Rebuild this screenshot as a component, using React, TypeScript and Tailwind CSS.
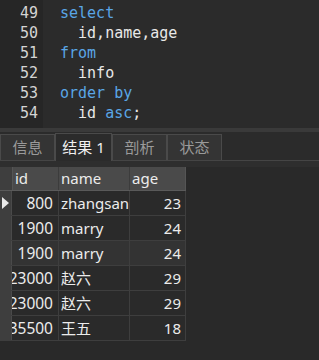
import React from 'react';

const mono = { fontFamily: '"DejaVu Sans Mono", "Liberation Mono", monospace' };
const ui = { fontFamily: '"Noto Sans", "Noto Sans CJK SC", sans-serif' };

type Tok = { t: string; kw?: boolean };
const lines: { n: number; indent: boolean; toks: Tok[] }[] = [
  { n: 49, indent: false, toks: [{ t: 'select', kw: true }] },
  { n: 50, indent: true, toks: [{ t: 'id,name,age' }] },
  { n: 51, indent: false, toks: [{ t: 'from', kw: true }] },
  { n: 52, indent: true, toks: [{ t: 'info' }] },
  { n: 53, indent: false, toks: [{ t: 'order by', kw: true }] },
  { n: 54, indent: true, toks: [{ t: 'id ' }, { t: 'asc', kw: true }, { t: ';' }] },
];

const rows = [
  { id: '800', name: 'zhangsan', age: 23 },
  { id: '1900', name: 'marry', age: 24 },
  { id: '1900', name: 'marry', age: 24 },
  { id: '23000', name: '赵六', age: 29 },
  { id: '23000', name: '赵六', age: 29 },
  { id: '35500', name: '王五', age: 18 },
];

const tabs = ['信息', '结果 1', '剖析', '状态'];

export default function App() {
  return (
    <div className="w-[319px] h-[360px] bg-[#292929] overflow-hidden flex flex-col">
      {/* Editor */}
      <div className="h-[128px] flex bg-[#2b2b2b]">
        <div className="w-[43px] bg-[#262626] pt-[3px] text-[15px] leading-[20px] text-[#d4d4d4] text-right pr-[5px]" style={mono}>
          {lines.map((l) => (
            <div key={l.n}>{l.n}</div>
          ))}
        </div>
        <div className="pl-[17px] pt-[3px] text-[15px] leading-[20px] text-[#e8e8e8] whitespace-pre" style={mono}>
          {lines.map((l) => (
            <div key={l.n}>
              {l.indent ? '  ' : ''}
              {l.toks.map((tk, i) => (
                <span key={i} className={tk.kw ? 'text-[#5aa6e6]' : ''}>{tk.t}</span>
              ))}
            </div>
          ))}
        </div>
      </div>
      <div className="h-[4px] bg-[#3a3a3a]" />

      {/* Tabs */}
      <div className="h-[29px] flex items-end bg-[#2b2b2b] border-b border-[#454545]" style={ui}>
        {tabs.map((t, i) =>
          i === 1 ? (
            <div key={t} className="w-[57px] h-[28px] -mb-px bg-[#2b2b2b] border border-b-0 border-[#4a4a4a] flex items-center justify-center text-[15px] text-[#f0f0f0]">
              {t}
            </div>
          ) : (
            <div key={t} className="w-[55px] h-[26px] bg-[#343434] border border-b-0 border-[#4a4a4a] flex items-center justify-center text-[15px] text-[#9a9a9a]">
              {t}
            </div>
          )
        )}
      </div>
      <div className="h-[6px] bg-[#2e2e2e]" />

      {/* Grid */}
      <div className="flex" style={ui}>
        <div className="text-[15px] text-[#ececec]">
          <div className="flex h-[24px] bg-[#4a4a4a] border-b border-[#5a5a5a]">
            <div className="w-[12px] bg-[#3e3e3e]" />
            <div className="w-[46px] border-l border-[#555] pl-[2px] leading-[23px]">id</div>
            <div className="w-[71px] border-l border-[#3c3c3c] pl-[2px] leading-[23px]">name</div>
            <div className="w-[57px] border-l border-[#3c3c3c] border-r border-r-[#555] pl-[2px] leading-[23px]">age</div>
          </div>
          {rows.map((r, i) => (
            <div key={i} className={`flex h-[25px] border-b border-[#3e3e3e] ${i === 2 ? 'bg-[#333333]' : 'bg-[#2a2a2a]'}`}>
              <div className="w-[12px] bg-[#3e3e3e] border-r border-[#4a4a4a] flex items-center justify-center">
                {i === 0 && (
                  <svg width="7" height="12" viewBox="0 0 7 12">
                    <path d="M0 0 L7 6 L0 12 Z" fill="#e8e8e8" />
                  </svg>
                )}
              </div>
              <div className="w-[46px] overflow-hidden flex justify-end pr-[5px] leading-[24px] whitespace-nowrap text-[15.5px]">
                <span className="shrink-0">{r.id}</span>
              </div>
              <div className="w-[71px] border-l border-[#3e3e3e] pl-[2px] leading-[24px] whitespace-nowrap overflow-hidden">{r.name}</div>
              <div className="w-[57px] border-l border-r border-[#3e3e3e] text-right pr-[4px] leading-[24px]">{r.age}</div>
            </div>
          ))}
        </div>
      </div>
    </div>
  );
}
